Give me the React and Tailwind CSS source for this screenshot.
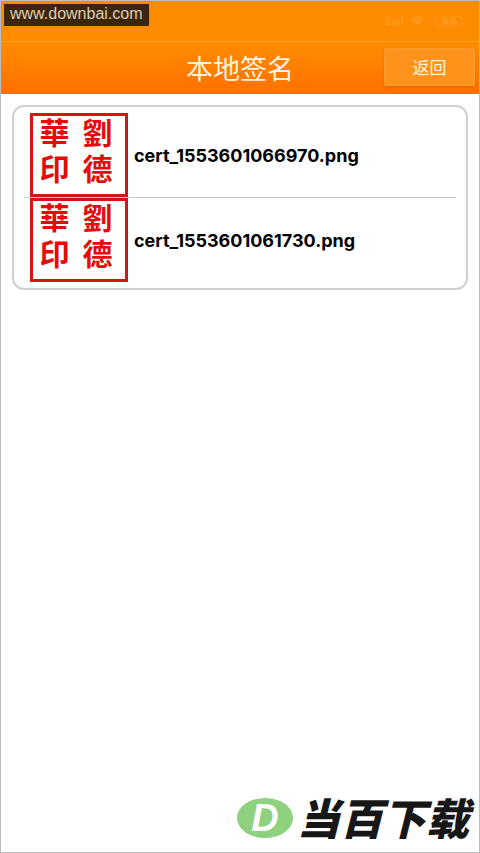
const certs = [
  { id: 1, name: "cert_1553601066970.png" },
  { id: 2, name: "cert_1553601061730.png" },
];

const StatusIcons = () => (
  <svg
    className="h-3 w-20 text-[#ff991f]"
    viewBox="0 0 80 12"
    fill="none"
    stroke="currentColor"
    aria-hidden="true"
  >
    <path d="M1 2h5M1 5h4M2 7v4M5 7v4M8 6v5M11 5v6M14 3v8M17 1v10" strokeWidth="1.5" />
    <path d="M26 4Q33 -1 40 4L33 11Z" fill="currentColor" stroke="none" />
    <path d="M28 6Q33 2 38 6" stroke="#ff8c00" />
    <rect x="50" y="1" width="28" height="10" rx="5" />
    <path d="M58 4h5v4h-5zM58 6h5M71 4h-5v2h5v2h-5" strokeWidth="1.5" />
  </svg>
);

const Seal = () => (
  <div
    lang="zh-Hant"
    className="grid h-21 w-[98px] shrink-0 grid-cols-2 content-start border-3 border-[#dc1212] pr-1.5 font-['Roboto','Noto_Sans_CJK_TC',sans-serif] text-center text-[30px] leading-9 font-bold text-[#e60b0b]"
  >
    <span>華</span>
    <span>劉</span>
    <span>印</span>
    <span>德</span>
  </div>
);

const CertRow = ({ name }) => (
  <li className="flex items-center gap-1.5 border-b border-[#c6c6c6] pl-1.5 last:border-b-0">
    <Seal />
    <p className="pt-0.5 font-['Inter',sans-serif] text-[18px] leading-6 font-bold text-black">
      {name}
    </p>
  </li>
);

const SiteLogo = () => (
  <div className="flex items-center gap-1">
    <div className="flex h-10 w-14 items-center justify-center rounded-[50%] bg-[#8fd17f] font-['Liberation_Sans',sans-serif] text-[38px] leading-10 font-bold text-white italic">
      D
    </div>
    <span className="pb-1 font-['Noto_Sans_CJK_SC',sans-serif] text-[43px] leading-9 font-black text-[#171717] italic">
      当百下载
    </span>
  </div>
);

function App() {
  return (
    <div className="relative flex min-h-screen flex-col border border-[#bdbdbd] bg-white font-['Noto_Sans_CJK_SC',sans-serif]">
      <div className="absolute top-[3px] left-[3px] bg-[#3b260c] px-1.5 pb-0.5 font-['Liberation_Sans',sans-serif] text-[16px] leading-5 text-[#dfcdb6]">
        www.downbai.com
      </div>

      <div className="flex h-10 items-center justify-end bg-[#ff8c00] px-3.5">
        <StatusIcons />
      </div>

      <header className="grid h-[53px] grid-cols-[1fr_auto_1fr] items-center border-t border-[#ffa01f] bg-linear-to-b from-[#ff8c00] to-[#ff7000] pr-1">
        <h1 className="col-start-2 pl-1 text-[27px] leading-10 text-[#fff3df]">
          本地签名
        </h1>
        <button
          type="button"
          className="mb-0.5 h-[38px] w-[91px] justify-self-end rounded-xs border border-[#ff9d2c] bg-[#ff931c] text-[17px] leading-9 text-[#fff3df] shadow-sm"
        >
          返回
        </button>
      </header>

      <main className="flex-1 px-[11px] pt-[11px]">
        <ul className="rounded-xl border-2 border-[#d0d0d0] px-2.5 pt-1.5 pb-1.5">
          {certs.map((cert) => (
            <CertRow key={cert.id} name={cert.name} />
          ))}
        </ul>
      </main>

      <footer className="flex justify-end pr-2.5 pb-3.5">
        <SiteLogo />
      </footer>
    </div>
  );
}

export default App;
